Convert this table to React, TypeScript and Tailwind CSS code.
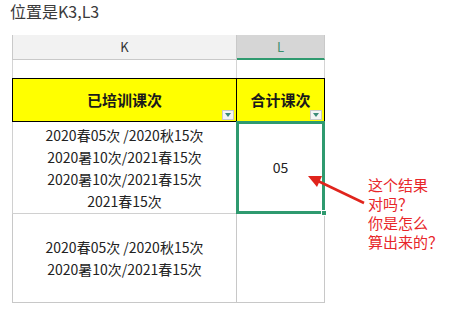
import React from 'react'

const font = { fontFamily: '"Noto Sans CJK SC", "Noto Sans", sans-serif' }

function FilterButton() {
  return (
    <div className="absolute right-[2px] bottom-[1px] w-[12px] h-[10px] bg-[#f4f4f4] border border-[#c8c8c8] flex items-center justify-center">
      <svg width="6" height="4" viewBox="0 0 6 4">
        <path d="M0 0 L6 0 L3 4 Z" fill="#3b8a78" />
      </svg>
    </div>
  )
}

const rowOne = ['2020春05次 /2020秋15次', '2020暑10次/2021春15次', '2020暑10次/2021春15次', '2021春15次']
const rowTwo = ['2020春05次 /2020秋15次', '2020暑10次/2021春15次']

export default function App() {
  return (
    <div className="relative w-[465px] h-[312px] bg-white overflow-hidden text-[#222]" style={font}>
      {/* title */}
      <div className="h-[35px] pl-[10px] pt-[1px] text-[16px] leading-[20px] text-[#3a3a3a]">位置是K3,L3</div>

      <div className="ml-[12px] w-[313px] grid grid-cols-[225px_88px]">
        {/* column headers */}
        <div className="h-[25px] bg-[#f2f2f2] border-l border-r border-b border-[#c9c9c9] flex items-center justify-center text-[13px] text-[#333]">K</div>
        <div className="h-[25px] bg-[#d6d6d6] border-r border-[#c9c9c9] border-b-2 border-b-[#2f9a6f] flex items-center justify-center text-[13px] text-[#3a8f6c]">L</div>

        {/* empty row */}
        <div className="h-[18px] border-l border-r border-[#d4d4d4]" />
        <div className="h-[18px] border-r border-[#d4d4d4]" />

        {/* yellow header */}
        <div className="relative h-[44px] bg-[#ffff00] border border-black flex items-center justify-center text-[15px] font-bold text-[#1a1a1a]">
          已培训课次
          <FilterButton />
        </div>
        <div className="relative h-[44px] bg-[#ffff00] border-t border-b border-r border-black flex items-center justify-center text-[15px] font-bold text-[#1a1a1a]">
          合计课次
          <FilterButton />
        </div>

        {/* data row 1 */}
        <div className="h-[92px] border-l border-r border-b border-[#d0d0d0] flex flex-col items-center justify-center text-[14px] leading-[22px]">
          {rowOne.map((t, i) => (
            <div key={i}>{t}</div>
          ))}
        </div>
        <div className="h-[92px] border-r border-b border-[#d0d0d0] flex items-center justify-center text-[14px]">05</div>

        {/* data row 2 */}
        <div className="h-[89px] border-l border-r border-b border-[#c8c8c8] flex flex-col items-center justify-center text-[14px] leading-[22px]">
          {rowTwo.map((t, i) => (
            <div key={i}>{t}</div>
          ))}
        </div>
        <div className="h-[89px] border-r border-b border-[#c8c8c8]" />
      </div>

      {/* selection box */}
      <div className="absolute left-[236px] top-[121px] w-[89px] h-[93px] border-[3px] border-[#2f9a6f]" />
      <div className="absolute left-[321px] top-[210px] w-[6px] h-[6px] bg-[#2f9a6f] border border-white" />

      {/* arrow */}
      <svg className="absolute left-0 top-0" width="465" height="312">
        <line x1="364" y1="203" x2="318" y2="181" stroke="#e0241c" strokeWidth="2.5" />
        <path d="M308 176 L322 176 L317 187 Z" fill="#e0241c" />
      </svg>

      {/* note */}
      <div className="absolute left-[368px] top-[175px] text-[15px] leading-[19px] text-[#e8262a]">
        <div>这个结果</div>
        <div>对吗？</div>
        <div>你是怎么</div>
        <div>算出来的？</div>
      </div>
    </div>
  )
}
